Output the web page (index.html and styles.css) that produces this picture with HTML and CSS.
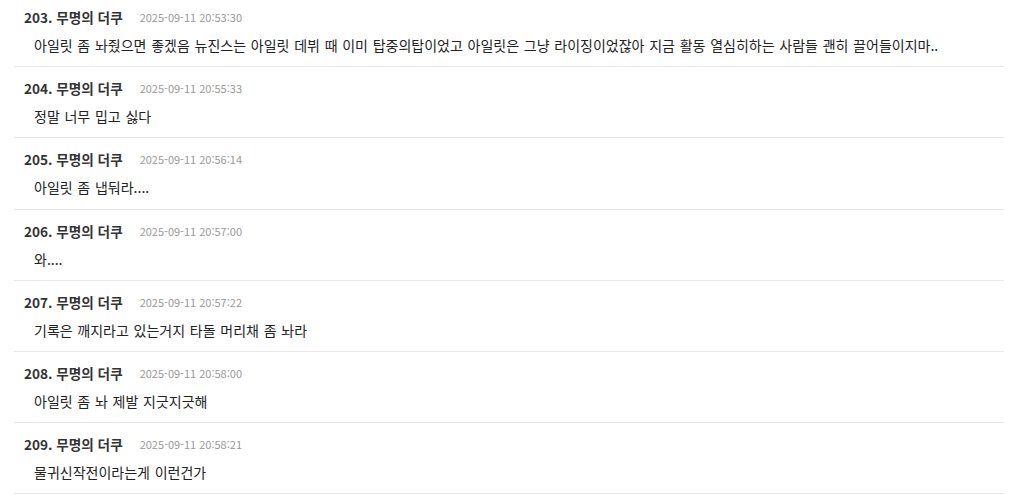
FILE: index.html
```html
<!DOCTYPE html>
<html lang="ko">
<head>
<meta charset="utf-8">
<link rel="stylesheet" href="styles.css">
</head>
<body>
<div class="list">
  <div class="item">
    <div class="head"><span class="name">203. 무명의 더쿠</span><span class="date">2025-09-11 20:53:30</span></div>
    <div class="text">아일릿 좀 놔줬으면 좋겠음 뉴진스는 아일릿 데뷔 때 이미 탑중의탑이었고 아일릿은 그냥 라이징이었잖아 지금 활동 열심히하는 사람들 괜히 끌어들이지마..</div>
  </div>
  <div class="item">
    <div class="head"><span class="name">204. 무명의 더쿠</span><span class="date">2025-09-11 20:55:33</span></div>
    <div class="text">정말 너무 밉고 싫다</div>
  </div>
  <div class="item">
    <div class="head"><span class="name">205. 무명의 더쿠</span><span class="date">2025-09-11 20:56:14</span></div>
    <div class="text">아일릿 좀 냅둬라....</div>
  </div>
  <div class="item">
    <div class="head"><span class="name">206. 무명의 더쿠</span><span class="date">2025-09-11 20:57:00</span></div>
    <div class="text">와....</div>
  </div>
  <div class="item">
    <div class="head"><span class="name">207. 무명의 더쿠</span><span class="date">2025-09-11 20:57:22</span></div>
    <div class="text">기록은 깨지라고 있는거지 타돌 머리채 좀 놔라</div>
  </div>
  <div class="item">
    <div class="head"><span class="name">208. 무명의 더쿠</span><span class="date">2025-09-11 20:58:00</span></div>
    <div class="text">아일릿 좀 놔 제발 지긋지긋해</div>
  </div>
  <div class="item">
    <div class="head"><span class="name">209. 무명의 더쿠</span><span class="date">2025-09-11 20:58:21</span></div>
    <div class="text">물귀신작전이라는게 이런건가</div>
  </div>
</div>
</body>
</html>
```

FILE: styles.css
```css
html, body {
  margin: 0;
  padding: 0;
  background: #fff;
}
body {
  font-family: "Noto Sans CJK KR", "Noto Sans", sans-serif;
  overflow: hidden;
}
.list {
  margin: -4px 29px 0 14px;
}
.item {
  border-bottom: 1px solid #e8e8e8;
  padding: 11px 0 11.2px;
}
.head {
  padding-left: 10px;
  line-height: 20px;
  height: 20px;
  display: flex;
  align-items: center;
}
.name {
  font-size: 13.6px;
  font-weight: 700;
  color: #333;
}
.date {
  margin-left: 17px;
  font-size: 11px;
  color: #999;
}
.text {
  margin-top: 8px;
  padding-left: 20px;
  font-size: 14px;
  line-height: 20px;
  word-spacing: 0.8px;
  color: #222;
}
```
